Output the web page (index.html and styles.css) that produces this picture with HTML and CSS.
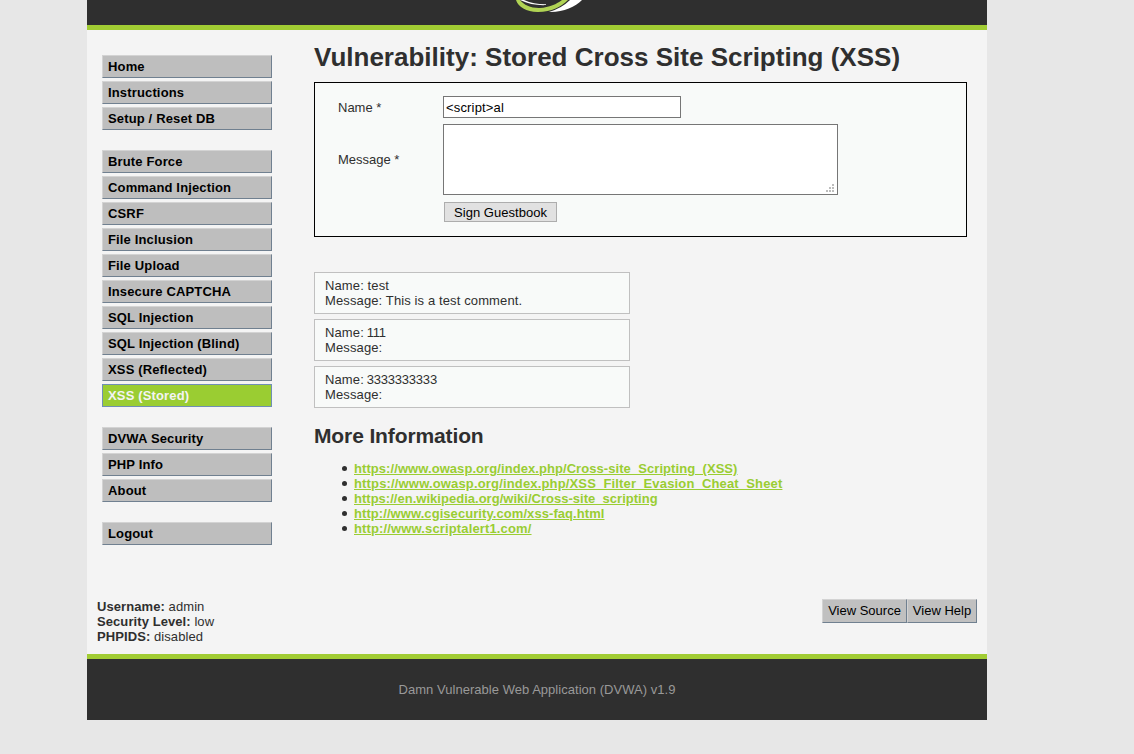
FILE: index.html
```html
<!DOCTYPE html>
<html lang="en">
<head>
<meta charset="utf-8">
<title>Vulnerability: Stored Cross Site Scripting (XSS)</title>
<link rel="stylesheet" href="styles.css">
</head>
<body>
<div class="container">
  <header class="header">
    <svg class="logo" width="72" height="14" viewBox="0 0 72 14">
      <path fill="#fff" d="M60 0H72C65 7 53 12.500 39 12Q52 8 60 0Z"/>
      <path fill="#fff" d="M14 0C21 3.200 28 4.300 36 4.200V5.100C27 5.500 18 4 10 0Z"/>
      <path fill="#b0d354" d="M6 0H10C14 5 21 8.300 30 8C39 7.500 47 4 52 0H58C51 7 42 11.800 28 12C17 12.200 8 7 6 0Z"/>
    </svg>
  </header>
  <div class="middle">
    <nav class="menu">
      <ul class="group"><li>Home</li><li>Instructions</li><li>Setup / Reset DB</li></ul>
      <ul class="group"><li>Brute Force</li><li>Command Injection</li><li>CSRF</li><li>File Inclusion</li><li>File Upload</li><li>Insecure CAPTCHA</li><li>SQL Injection</li><li>SQL Injection (Blind)</li><li>XSS (Reflected)</li><li class="selected">XSS (Stored)</li></ul>
      <ul class="group"><li>DVWA Security</li><li>PHP Info</li><li>About</li></ul>
      <ul class="group"><li>Logout</li></ul>
    </nav>
    <main class="main">
      <h1>Vulnerability: Stored Cross Site Scripting (XSS)</h1>
      <form class="form">
        <label for="name">Name *</label>
        <input class="field" id="name" type="text" value="&lt;script&gt;al">
        <label for="message">Message *</label>
        <div class="area">
          <textarea class="field" id="message"></textarea>
          <svg class="grip" width="8" height="8" fill="#bdbdbd"><path d="M6 0h2v2h-2zM3 3h2v2h-2zM6 3h2v2h-2zM0 6h2v2h-2zM3 6h2v2h-2zM6 6h2v2h-2z"/></svg>
        </div>
        <button class="sign" type="button">Sign Guestbook</button>
      </form>
      <section class="comments">
        <div class="comment">Name: test<br>Message: This is a test comment.</div>
        <div class="comment">Name: <span class="digits">111</span><br>Message:</div>
        <div class="comment">Name: <span class="digits">3333333333</span><br>Message:</div>
      </section>
      <h2>More Information</h2>
      <ul class="links">
        <li><a href="#">https://www.owasp.org/index.php/Cross-site_Scripting_(XSS)</a></li>
        <li class="wider"><a href="#">https://www.owasp.org/index.php/XSS_Filter_Evasion_Cheat_Sheet</a></li>
        <li class="tight"><a href="#">https://en.wikipedia.org/wiki/Cross-site_scripting</a></li>
        <li><a href="#">http://www.cgisecurity.com/xss-faq.html</a></li>
        <li class="wide"><a href="#">http://www.scriptalert1.com/</a></li>
      </ul>
    </main>
  </div>
  <div class="system">
    <div class="status"><b>Username:</b> admin<br><b>Security Level:</b> low<br><b>PHPIDS:</b> disabled</div>
    <div class="views"><button type="button" class="source">View Source</button><button type="button" class="help">View Help</button></div>
  </div>
  <footer class="footer">Damn Vulnerable Web Application (DVWA) v1.9</footer>
</div>
</body>
</html>
```
FILE: styles.css
```css
* { box-sizing: border-box; }
body { margin: 0; background: #e7e7e7; color: #2f2f2f; font: 13px/15px "Liberation Sans", Arial, sans-serif; }
ul { margin: 0; padding: 0; }
button, input, textarea { font: inherit; margin: 0; border-radius: 0; color: #000; }
.container { width: 900px; height: 720px; margin-left: 87px; background: #f4f4f4; display: flex; flex-direction: column; }
.header { height: 30px; background: #2f2f2f; border-bottom: 5px solid #a1cc33; padding-left: 423px; }
.logo { display: block; }
.middle { height: 569px; display: flex; }
.menu { width: 227px; padding: 25px 0 0 15px; display: flex; flex-direction: column; gap: 20px; }
.group { width: 170px; display: flex; flex-direction: column; gap: 3px; list-style: none; }
.group li { height: 23px; padding: 3px 5px; background: #bebebe; border: 1px solid; border-color: #d3d3d3 #708090 #708090 #d3d3d3; color: #000; font-weight: bold; letter-spacing: .15px; }
.group .selected { background: #9acd32; border-color: #708fb5; color: #f4f4f4; }
.main { width: 653px; padding-top: 12px; }
h1 { margin: 0 0 10px; font-size: 26px; line-height: 30px; letter-spacing: .01px; white-space: nowrap; }
.form { width: 653px; height: 155px; padding: 13px 22px; border: 1px solid #000; background: #f8faf9; display: grid; grid-template-columns: 106px 395px; grid-template-rows: 22px 71px 20px; row-gap: 6px; align-items: center; }
.form label { padding-left: 1px; }
.field { display: block; border: 1px solid #767676; background: #fff; outline: 0; resize: none; }
input.field { width: 238px; height: 22px; padding: 1px 2px; letter-spacing: .17px; }
.area { position: relative; height: 71px; }
textarea.field { width: 395px; height: 71px; padding: 2px; }
.grip { position: absolute; right: 4px; bottom: 3px; }
.sign { grid-column: 2; width: 113px; height: 20px; margin: 2px 0 0 1px; padding: 0; background: #e1e1e1; border: 1px solid #adadad; letter-spacing: .03px; }
.comments { margin-top: 35px; display: flex; flex-direction: column; gap: 5px; letter-spacing: .12px; }
.comment { width: 316px; height: 42px; padding: 5px 10px; border: 1px solid #c0c0c0; background: #f8faf9; }
.digits { margin-left: -1px; letter-spacing: -.2px; }
h2 { margin: 16px 0 13px; font-size: 21px; line-height: 24px; letter-spacing: -.12px; }
.links { padding-left: 28px; list-style: none; letter-spacing: .07px; }
.links li { display: flex; align-items: center; gap: 7px; }
.links li::before { content: ""; width: 5px; height: 5px; border-radius: 50%; background: #2f2f2f; }
.links .tight { letter-spacing: .02px; }
.links .wide { letter-spacing: .14px; }
.links .wider { letter-spacing: .16px; }
.links a { color: #9acd32; font-weight: bold; text-decoration: underline; }
.system { height: 55px; padding: 0 10px; display: flex; justify-content: space-between; letter-spacing: .08px; }
.views { display: flex; }
.views button { height: 24px; padding: 0 0 2px; background: #c0c0c0; border: 1px solid; border-color: #d3d3d3 #708090 #708090 #d3d3d3; letter-spacing: 0; }
.views .source { width: 85px; }
.views .help { width: 70px; }
.footer { height: 66px; padding-top: 23px; border-top: 5px solid #a1cc33; background: #2f2f2f; color: #999; text-align: center; letter-spacing: .03px; }
```
